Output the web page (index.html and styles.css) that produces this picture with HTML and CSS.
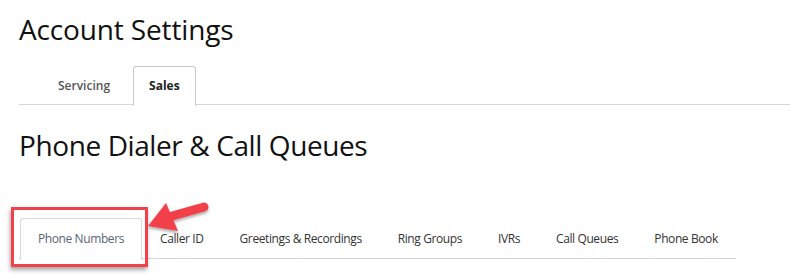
FILE: index.html
```html
<!DOCTYPE html>
<html>
	<head>
	<meta charset="utf-8">
	<link rel="stylesheet" href="styles.css">
	</head>

	<body>
		<div class="page">
			<h1 class="title">Account Settings</h1>

			<div class="tabs top-tabs">
				<div class="tab">Servicing</div>
				<div class="tab active">Sales</div>
			</div>

			<h2 class="title section-title">Phone Dialer &amp; Call Queues</h2>

			<div class="sub-wrap">
				<div class="tabs sub-tabs">
					<div class="tab active">Phone Numbers</div>
					<div class="tab">Caller ID</div>
					<div class="tab">Greetings &amp; Recordings</div>
					<div class="tab">Ring Groups</div>
					<div class="tab">IVRs</div>
					<div class="tab">Call Queues</div>
					<div class="tab">Phone Book</div>
				</div>

				<!-- annotation -->
				<div class="callout-box"></div>
				<svg class="callout-arrow" width="70" height="45" viewBox="0 0 70 45">
					<defs>
						<filter id="shadow" x="-20%" y="-20%" width="150%" height="160%">
							<feDropShadow dx="0" dy="2" stdDeviation="1.5" flood-color="#000" flood-opacity="0.35"/>
						</filter>
					</defs>
					<g filter="url(#shadow)">
						<path d="M59 8 L27 17" stroke="#f2414b" stroke-width="9" stroke-linecap="round" fill="none"/>
						<polygon points="3,27 21,4 33,32" fill="#f2414b"/>
					</g>
				</svg>
			</div>
		</div>
	</body>
</html>
```

FILE: styles.css
```css
body, html {
	margin: 0;
	padding: 0;
	background: #fff;
}

.page {
	padding: 11px 0 30px 19px;
	font-family: "Open Sans", sans-serif;
	color: #111;
}

.title {
	font-weight: 400;
	font-size: 28px;
	line-height: 36px;
	margin: 0;
	letter-spacing: -0.15px;
}

.section-title {
	margin-top: 22px;
	letter-spacing: -0.4px;
}

.tabs {
	display: flex;
	border-bottom: 1px solid #d4d6dc;
}

.tab {
	font-size: 12px;
	color: #333;
	white-space: nowrap;
}

.top-tabs {
	margin-top: 19px;
	padding-left: 23px;
	height: 38px;
}

.top-tabs .tab {
	font-weight: 600;
	color: #555;
	padding: 0 15px;
	line-height: 38px;
	margin-right: 7px;
	border: 1px solid transparent;
	border-bottom: none;
	border-radius: 3px 3px 0 0;
}

.top-tabs .tab.active {
	color: #222;
	font-weight: 700;
	background: #fff;
	border-color: #c8cad0;
	margin-bottom: -1px;
	height: 39px;
}

.sub-wrap {
	position: relative;
	margin-top: 55px;
	width: fit-content;
}

.sub-tabs {
	height: 40px;
	padding-left: 1px;
}

.sub-tabs .tab {
	padding: 0 17px;
	line-height: 40px;
	letter-spacing: -0.4px;
	border: 1px solid transparent;
	border-bottom: none;
	border-radius: 3px 3px 0 0;
}

.sub-tabs .tab.active {
	color: #5b6477;
	border-color: #d6d8de;
	background: #fff;
	height: 41px;
	margin-bottom: -1px;
}

.callout-box {
	position: absolute;
	left: -8px;
	top: -11px;
	width: 131px;
	height: 54px;
	border: 3px solid #f2414b;
	box-shadow: -1px 3px 4px rgba(0, 0, 0, 0.35);
}

.callout-arrow {
	position: absolute;
	left: 126px;
	top: -19px;
}
```
